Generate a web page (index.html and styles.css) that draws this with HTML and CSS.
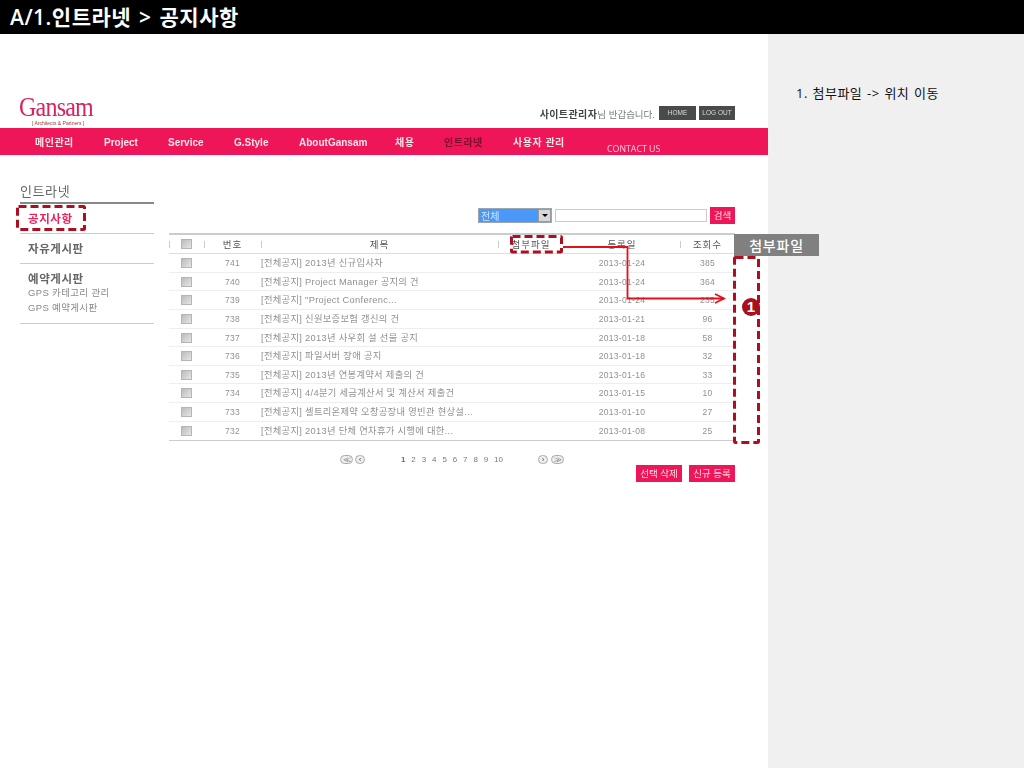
FILE: index.html
```html
<!DOCTYPE html>
<html lang="ko">
<head>
<meta charset="utf-8">
<title>공지사항</title>
<link rel="stylesheet" href="styles.css">
</head>
<body>
<header class="titlebar">A/1.인트라넷 &gt; 공지사항</header>
<div class="stage">
  <main class="screen">
    <div class="top">
      <div class="logo"><div class="logo-name">Gansam</div><div class="logo-sub">[ Architects &amp; Partners ]</div></div>
      <div class="userbox">
        <span class="welcome"><b>사이트관리자</b>님 반갑습니다.</span>
        <span class="topbtn">HOME</span>
        <span class="topbtn">LOG OUT</span>
      </div>
    </div>
    <nav class="nav">
      <span class="nav-item n1">메인관리</span>
      <span class="nav-item latin n2">Project</span>
      <span class="nav-item latin n3">Service</span>
      <span class="nav-item latin n4">G.Style</span>
      <span class="nav-item latin n5">AboutGansam</span>
      <span class="nav-item n6">채용</span>
      <span class="nav-item n7 current">인트라넷</span>
      <span class="nav-item n8">사용자 관리</span>
      <span class="contact">CONTACT US</span>
    </nav>
    <div class="content">
      <aside class="side">
        <h2 class="side-title">인트라넷</h2>
        <div class="side-item active">공지사항</div>
        <div class="side-item">자유게시판</div>
        <div class="side-item group">
          <div>예약게시판</div>
          <div class="sub">GPS 카테고리 관리</div>
          <div class="sub">GPS 예약게시판</div>
        </div>
      </aside>
      <section class="board">
        <div class="search">
          <div class="select"><span class="select-val">전체</span><span class="select-arrow"></span></div>
          <div class="search-input"></div>
          <span class="pinkbtn search-btn">검색</span>
        </div>
        <div class="table">
          <div class="row head">
            <span class="c sep"><i class="check"></i></span><span class="c sep">번호</span><span class="c sep">제목</span><span class="c sep">첨부파일</span><span class="c">등록일</span><span class="c sep">조회수</span>
          </div>
          <div class="row"><span class="c"><i class="check"></i></span><span class="c">741</span><span class="c t">[전체공지] 2013년 신규입사자</span><span class="c"></span><span class="c">2013-01-24</span><span class="c">385</span></div>
          <div class="row"><span class="c"><i class="check"></i></span><span class="c">740</span><span class="c t">[전체공지] Project Manager 공지의 건</span><span class="c"></span><span class="c">2013-01-24</span><span class="c">364</span></div>
          <div class="row"><span class="c"><i class="check"></i></span><span class="c">739</span><span class="c t">[전체공지] "Project Conferenc...</span><span class="c"></span><span class="c">2013-01-24</span><span class="c">235</span></div>
          <div class="row"><span class="c"><i class="check"></i></span><span class="c">738</span><span class="c t">[전체공지] 신원보증보험 갱신의 건</span><span class="c"></span><span class="c">2013-01-21</span><span class="c">96</span></div>
          <div class="row"><span class="c"><i class="check"></i></span><span class="c">737</span><span class="c t">[전체공지] 2013년 사우회 설 선물 공지</span><span class="c"></span><span class="c">2013-01-18</span><span class="c">58</span></div>
          <div class="row"><span class="c"><i class="check"></i></span><span class="c">736</span><span class="c t">[전체공지] 파일서버 장애 공지</span><span class="c"></span><span class="c">2013-01-18</span><span class="c">32</span></div>
          <div class="row"><span class="c"><i class="check"></i></span><span class="c">735</span><span class="c t">[전체공지] 2013년 연봉계약서 제출의 건</span><span class="c"></span><span class="c">2013-01-16</span><span class="c">33</span></div>
          <div class="row"><span class="c"><i class="check"></i></span><span class="c">734</span><span class="c t">[전체공지] 4/4분기 세금계산서 및 계산서 제출건</span><span class="c"></span><span class="c">2013-01-15</span><span class="c">10</span></div>
          <div class="row"><span class="c"><i class="check"></i></span><span class="c">733</span><span class="c t">[전체공지] 셀트리온제약 오창공장내 영빈관 현상설...</span><span class="c"></span><span class="c">2013-01-10</span><span class="c">27</span></div>
          <div class="row"><span class="c"><i class="check"></i></span><span class="c">732</span><span class="c t">[전체공지] 2013년 단체 연차휴가 시행에 대한...</span><span class="c"></span><span class="c">2013-01-08</span><span class="c">25</span></div>
        </div>
        <div class="pager">
          <span class="pg wide">≪</span><span class="pg">‹</span>
          <span class="nums"><b>1</b><span>2</span><span>3</span><span>4</span><span>5</span><span>6</span><span>7</span><span>8</span><span>9</span><span>10</span></span>
          <span class="pg">›</span><span class="pg wide">≫</span>
        </div>
        <div class="actions"><span class="pinkbtn act">선택 삭제</span><span class="pinkbtn act">신규 등록</span></div>
      </section>
    </div>
    <svg class="overlay" width="768" height="768" viewBox="0 0 768 768" aria-hidden="true">
      <rect class="dash" x="17.5" y="206.5" width="67" height="23" rx="1"/>
      <rect class="dash" x="511.5" y="236.5" width="50" height="15.5" rx="1"/>
      <rect class="dash" x="734.5" y="257.5" width="24" height="185" rx="1"/>
      <path class="line" d="M563 247H627.5V298.5H724"/>
      <path class="line" d="M715 294L724 298.5L715 303"/>
    </svg>
    <div class="callout">첨부파일</div>
    <div class="marker">1</div>
  </main>
  <aside class="notes">1. 첨부파일 -&gt; 위치 이동</aside>
</div>
</body>
</html>
```
FILE: styles.css
```css
* { box-sizing: border-box; }
html, body { margin: 0; padding: 0; }
body { width: 1024px; height: 768px; overflow: hidden; background: #fff; font-family: "Liberation Sans", "Noto Sans CJK KR", sans-serif; }
.titlebar { height: 34px; background: #000; color: #fff; font: 600 21px/34px "Open Sans", "Noto Sans CJK KR", sans-serif; padding-left: 10px; white-space: pre; letter-spacing: .5px; word-spacing: 2px; }
.stage { display: flex; height: 734px; }
.screen { position: relative; width: 768px; background: #fff; }
.notes { width: 256px; background: #f0f0f0; padding: 50px 0 0 28px; font: 13px/18px "Open Sans", "Noto Sans CJK KR", sans-serif; color: #111; letter-spacing: .45px; word-spacing: 1px; }

.top, .nav, .content { filter: blur(.3px); }
.top { height: 94px; display: flex; justify-content: space-between; align-items: flex-end; padding: 0 33px 0 19px; }
.logo-name { font: 27px/26px "Liberation Serif", serif; color: #d8245e; letter-spacing: -.9px; transform: scaleX(.89); transform-origin: left center; }
.logo-sub { font: 5px/5px "Liberation Sans", sans-serif; color: #a33; margin: 1px 0 2px 13px; white-space: nowrap; }
.userbox { display: flex; align-items: flex-end; gap: 3px; margin-bottom: 8px; }
.welcome { font-size: 9.5px; line-height: 12px; color: #777; margin: 0 1px -1px 0; }
.welcome b { color: #444; font-size: 10px; letter-spacing: .4px; }
.topbtn { width: 37px; height: 14px; background: #4a4a4a; color: #ddd; font-size: 6.5px; line-height: 14px; text-align: center; white-space: nowrap; }
.topbtn:last-child { width: 36px; }

.nav { position: relative; height: 27px; background: #ee1558; color: #fff; }
.nav-item { position: absolute; top: 8px; font: bold 10px/14px "Liberation Sans", "Noto Sans CJK KR", sans-serif; letter-spacing: .5px; white-space: nowrap; color: #fbe4ea; }
.nav-item.latin { letter-spacing: 0; }
.n1 { left: 35px; } .n2 { left: 104px; } .n3 { left: 168px; } .n4 { left: 234px; } .n5 { left: 299px; } .n6 { left: 395px; } .n7 { left: 444px; } .n8 { left: 513px; }
.current { color: #7a0c2c; }
.contact { position: absolute; left: 607px; top: 15px; font: 8.8px/13px "Open Sans", sans-serif; color: #f8d0dc; white-space: nowrap; }

.content { display: flex; padding: 0 33px 0 20px; }
.side { width: 134px; margin-right: 15px; padding-top: 27px; }
.side-title { margin: 0; height: 22px; font: 400 13px/18px "Noto Sans CJK KR", sans-serif; color: #666; letter-spacing: .6px; border-bottom: 2px solid #888; }
.side-item { height: 30px; padding-left: 8px; font: bold 11.5px/29px "Noto Sans CJK KR", sans-serif; color: #666; letter-spacing: .55px; border-bottom: 1px solid #ccc; }
.side-item.active { color: #e8245f; }
.side-item.group { height: 60px; line-height: 14px; padding-top: 7px; }
.sub { font: 400 9.5px/15px "Liberation Sans", "Noto Sans CJK KR", sans-serif; color: #888; letter-spacing: .35px; }

.board { width: 566px; padding-top: 52px; }
.search { height: 26px; display: flex; justify-content: flex-end; align-items: flex-start; }
.select { width: 74px; height: 15px; margin-top: 1px; border: 1px solid #9aa6b0; display: flex; background: #fff; }
.select-val { flex: 1; background: #4a98f8; color: #cfe6ff; font: 10px/13px "Noto Sans CJK KR", sans-serif; padding-left: 2px; }
.select-arrow { width: 13px; background: #d8d8d8; border: 1px solid #999; position: relative; }
.select-arrow::after { content: ""; position: absolute; left: 3px; top: 4px; border: 3px solid transparent; border-top: 3px solid #000; }
.search-input { width: 152px; height: 13px; margin: 2px 3px 0 3px; border: 1px solid #ccc; background: #fff; }
.pinkbtn { background: #ee1558; color: #fbdbe5; font: 9.5px/17px "Noto Sans CJK KR", sans-serif; text-align: center; display: block; }
.search-btn { width: 25px; height: 17px; }

.table { border-top: 2px solid #ccc; border-bottom: 1px solid #ccc; }
.row { display: grid; grid-template-columns: 35px 57px 237px 66px 116px 55px; height: 18.65px; align-items: center; font: 8.5px/18px "Liberation Sans", "Noto Sans CJK KR", sans-serif; color: #909090; letter-spacing: .3px; border-bottom: 1px solid #eee; }
.row:last-child { border-bottom: 0; }
.row.head { height: 19px; font: 9.5px/18px "Noto Sans CJK KR", sans-serif; color: #555; letter-spacing: 1px; border-bottom: 1px solid #ddd; }
.c { display: flex; justify-content: center; align-items: center; height: 100%; white-space: nowrap; }
.c.t { justify-content: flex-start; font-size: 9.3px; }
.sep { position: relative; }
.sep::before { content: ""; position: absolute; left: 0; top: 6px; height: 7px; width: 1px; background: #ccc; }
.check { display: block; width: 11px; height: 10px; border: 1px solid #b5b5b5; background: linear-gradient(135deg, #bbb, #e6e6e6); }

.pager { position: relative; height: 20px; margin-top: 9px; font-size: 8px; color: #777; }
.pg { position: absolute; top: 5px; height: 9px; width: 10px; border: 1px solid #aaa; border-radius: 5px; background: #eee; font: 8px/7px "Liberation Sans", sans-serif; text-align: center; color: #555; }
.pg.wide { width: 13px; }
.pg:nth-child(1) { left: 171px; } .pg:nth-child(2) { left: 186px; }
.pg:nth-child(4) { left: 369px; } .pg:nth-child(5) { left: 382px; }
.nums { position: absolute; left: 232px; top: 4px; display: flex; gap: 5.9px; font: 8px/11px "Liberation Sans", sans-serif; }
.nums b { color: #f0306a; }
.actions { display: flex; justify-content: flex-end; gap: 7px; margin-top: -5px; }
.act { width: 46px; height: 17px; }

.overlay { position: absolute; left: 0; top: -34px; pointer-events: none; }
.dash { fill: none; stroke: #ae0f20; stroke-width: 3; stroke-dasharray: 8 4; }
.line { fill: none; stroke: #e0101c; stroke-width: 1.8; }
.callout { position: absolute; left: 734px; top: 200px; width: 85px; height: 22px; background: #808080; color: #fff; font: 500 14px/22px "Noto Sans CJK KR", sans-serif; text-align: center; letter-spacing: .8px; }
.marker { position: absolute; left: 742px; top: 264px; width: 18px; height: 18px; border-radius: 50%; background: #a80f1f; color: #fff; font: bold 15px/18px "Liberation Sans", sans-serif; text-align: center; }
```
